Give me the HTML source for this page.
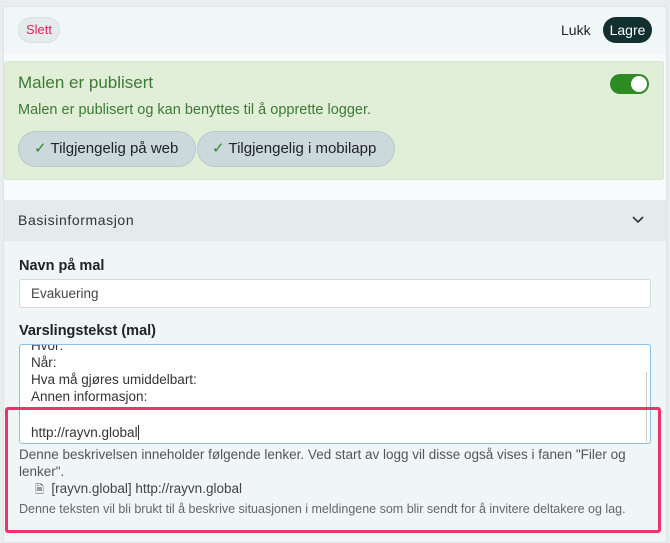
<!DOCTYPE html>
<html><head><meta charset="utf-8"><style>
*{box-sizing:border-box;margin:0;padding:0}
body{width:670px;height:543px;overflow:hidden;background:#e9eded;font-family:"Liberation Sans",sans-serif;position:relative}
.abs{position:absolute}
.panel{left:3px;top:6px;width:664px;height:537px;background:#f0f5f5;border:1px solid #dde4e4}
</style></head><body>
<div class="abs panel"></div>
<div class="abs" style="left:4px;top:7px;width:662px;height:47px;background:#f1f6f6"></div>
<div class="abs" style="left:18px;top:17px;width:42px;height:26px;border-radius:13px;background:#e4ebeb;border:1px solid #d9e1e1;color:#e0245e;font-size:13px;line-height:24px;text-align:center">Slett</div>
<div class="abs" style="left:561px;top:22px;font-size:14px;color:#222">Lukk</div>
<div class="abs" style="left:603px;top:17px;width:49px;height:26px;border-radius:13px;background:#12302f;color:#fff;font-size:14px;line-height:26px;text-align:center">Lagre</div>
<div class="abs" style="left:4px;top:54px;width:662px;height:146px;background:#f8fbfb"></div>
<div class="abs" style="left:4px;top:61px;width:660px;height:119px;background:#e1efd9;border:1px solid #d5e6cc;border-radius:3px"></div>
<div class="abs" style="left:18px;top:73px;font-size:17px;color:#3d7a35">Malen er publisert</div>
<div class="abs" style="left:610px;top:74px;width:39px;height:20px;border-radius:10px;background:#2e8a23"></div>
<div class="abs" style="left:631px;top:76px;width:16px;height:16px;border-radius:8px;background:#fff"></div>
<div class="abs" style="left:18px;top:102px;font-size:14.5px;color:#3d7a35">Malen er publisert og kan benyttes til å opprette logger.</div>
<div class="abs" style="left:18px;top:131px;width:178px;height:36px;border-radius:18px;background:#cbd9dc;border:1px solid #b8c9cc;font-size:15px;line-height:34px;color:#222;padding-left:15px"><span style="color:#2e8a23">✓</span> Tilgjengelig på web</div>
<div class="abs" style="left:197px;top:131px;width:198px;height:36px;border-radius:18px;background:#cbd9dc;border:1px solid #b8c9cc;font-size:15px;line-height:34px;color:#222;padding-left:14px"><span style="color:#2e8a23">✓</span> Tilgjengelig i mobilapp</div>
<div class="abs" style="left:4px;top:200px;width:662px;height:41px;background:#e3ebeb"></div>
<div class="abs" style="left:18px;top:212px;font-size:14px;color:#333;letter-spacing:.6px">Basisinformasjon</div>
<svg class="abs" style="left:631px;top:214px" width="14" height="12"><path d="M2 3l5 5 5-5" fill="none" stroke="#333" stroke-width="1.6"/></svg>
<div class="abs" style="left:19px;top:258px;font-size:14.5px;font-weight:bold;color:#222">Navn på mal</div>
<div class="abs" style="left:19px;top:279px;width:632px;height:29px;background:#fff;border:1px solid #d3dada;border-radius:3px;font-size:13.5px;color:#444;padding:6px 11px">Evakuering</div>
<div class="abs" style="left:19px;top:323px;font-size:14.5px;font-weight:bold;color:#222">Varslingstekst (mal)</div>
<div class="abs" style="left:19px;top:344px;width:632px;height:100px;background:#fff;border:1px solid #8ebfe8;border-radius:3px;overflow:hidden;font-size:13.5px;color:#333;line-height:17px;padding-left:11px">
<div style="margin-top:-8px">Hvor:</div><div>Når:</div><div>Hva må gjøres umiddelbart:</div><div>Annen informasjon:</div><div>&nbsp;</div><div style="margin-top:2px">http://rayvn.global <span style="border-left:1px solid #333"></span></div></div>
<div class="abs" style="left:646px;top:372px;width:1px;height:70px;background:#ccc"></div>
<div class="abs" style="left:19px;top:446px;width:625px;font-size:13.5px;color:#555;line-height:17px">Denne beskrivelsen inneholder følgende lenker. Ved start av logg vil disse også vises i fanen "Filer og lenker".</div>
<div class="abs" style="left:35px;top:481px;font-size:13.5px;color:#444"><span style="font-size:11px">🗎</span>&nbsp; [rayvn.global] http://rayvn.global</div>
<div class="abs" style="left:19px;top:502px;font-size:12.5px;color:#666">Denne teksten vil bli brukt til å beskrive situasjonen i meldingene som blir sendt for å invitere deltakere og lag.</div>
<div class="abs" style="left:5px;top:407px;width:656px;height:126px;border:3px solid #f0326a;border-radius:3px"></div>
</body></html>
